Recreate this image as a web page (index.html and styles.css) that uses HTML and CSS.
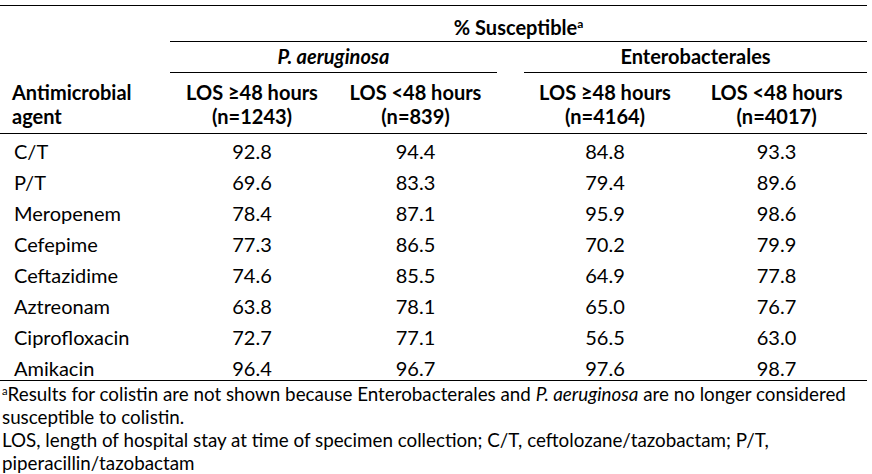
FILE: index.html
```html
<!DOCTYPE html>
<html lang="en">
<head>
<meta charset="utf-8">
<title>Susceptibility by length of stay</title>
<link rel="stylesheet" href="styles.css">
</head>
<body>
<div class="page">
  <table class="sus-table">
    <colgroup>
      <col class="c-agent">
      <col class="c-p1">
      <col class="c-p2">
      <col class="c-gap">
      <col class="c-e1">
      <col class="c-e2">
    </colgroup>
    <thead>
      <tr class="r-top">
        <th class="blank"></th>
        <th class="group ruled" colspan="5">% Susceptible<sup class="fn">a</sup></th>
      </tr>
      <tr class="r-org">
        <th class="blank"></th>
        <th class="group ruled" colspan="2"><i>P. aeruginosa</i></th>
        <th class="blank"></th>
        <th class="group ruled" colspan="2">Enterobacterales</th>
      </tr>
      <tr class="r-head">
        <th class="agent-h">Antimicrobial<br>agent</th>
        <th class="num-h">LOS ≥48 hours<br>(n=1243)</th>
        <th class="num-h">LOS &lt;48 hours<br>(n=839)</th>
        <th class="blank"></th>
        <th class="num-h">LOS ≥48 hours<br>(n=4164)</th>
        <th class="num-h">LOS &lt;48 hours<br>(n=4017)</th>
      </tr>
    </thead>
    <tbody>
      <tr><td class="agent">C/T</td><td>92.8</td><td>94.4</td><td></td><td>84.8</td><td>93.3</td></tr>
      <tr><td class="agent">P/T</td><td>69.6</td><td>83.3</td><td></td><td>79.4</td><td>89.6</td></tr>
      <tr><td class="agent">Meropenem</td><td>78.4</td><td>87.1</td><td></td><td>95.9</td><td>98.6</td></tr>
      <tr><td class="agent">Cefepime</td><td>77.3</td><td>86.5</td><td></td><td>70.2</td><td>79.9</td></tr>
      <tr><td class="agent">Ceftazidime</td><td>74.6</td><td>85.5</td><td></td><td>64.9</td><td>77.8</td></tr>
      <tr><td class="agent">Aztreonam</td><td>63.8</td><td>78.1</td><td></td><td>65.0</td><td>76.7</td></tr>
      <tr><td class="agent">Ciprofloxacin</td><td>72.7</td><td>77.1</td><td></td><td>56.5</td><td>63.0</td></tr>
      <tr class="r-last"><td class="agent">Amikacin</td><td>96.4</td><td>96.7</td><td></td><td>97.6</td><td>98.7</td></tr>
    </tbody>
  </table>
  <div class="notes">
    <p><sup class="fn">a</sup>Results for colistin are not shown because Enterobacterales and <i>P. aeruginosa</i> are no longer considered<br>susceptible to colistin.</p>
    <p>LOS, length of hospital stay at time of specimen collection; C/T, ceftolozane/tazobactam; P/T, piperacillin/tazobactam</p>
  </div>
</div>
</body>
</html>
```

FILE: styles.css
```css
html, body {
  margin: 0;
  padding: 0;
  background: #ffffff;
}

.page {
  padding-top: 5px;
  font-family: Lato, "Open Sans", sans-serif;
  color: #000;
}

.sus-table {
  width: 867px;
  table-layout: fixed;
  border-collapse: separate;
  border-spacing: 0;
  font-size: 20px;
}

.c-agent { width: 170px; }
.c-p1 { width: 164px; }
.c-p2 { width: 163px; }
.c-gap { width: 27px; }
.c-e1 { width: 162px; }
.c-e2 { width: 181px; }

.sus-table th,
.sus-table td {
  padding: 0;
  vertical-align: top;
  border-bottom: 1px solid transparent;
}

.sus-table th {
  font-weight: 700;
  text-align: center;
  line-height: 24px;
}

.r-top th {
  border-top: 1px solid #000;
  padding-top: 9px;
  padding-bottom: 2px;
}

.r-org th {
  padding-top: 2px;
  padding-bottom: 4px;
}

.sus-table th.ruled {
  border-bottom-color: #000;
}

.r-head th {
  padding-top: 7px;
  padding-bottom: 5px;
  border-bottom-color: #000;
}

.sus-table th.agent-h {
  text-align: left;
  padding-left: 12px;
}

.sus-table td {
  text-align: center;
  line-height: 22px;
  padding-top: 6px;
  padding-bottom: 2px;
}

.sus-table td.agent {
  text-align: left;
  padding-left: 14px;
}

.r-last td {
  padding-bottom: 1px;
  border-bottom-color: #000;
}

sup.fn {
  font-size: 0.6em;
  line-height: 0;
  vertical-align: 0.55em;
}

.notes {
  padding-top: 1px;
  padding-left: 2px;
  width: 866px;
  font-size: 18.8px;
}

.notes p {
  margin: 0;
  line-height: 23px;
}
```
